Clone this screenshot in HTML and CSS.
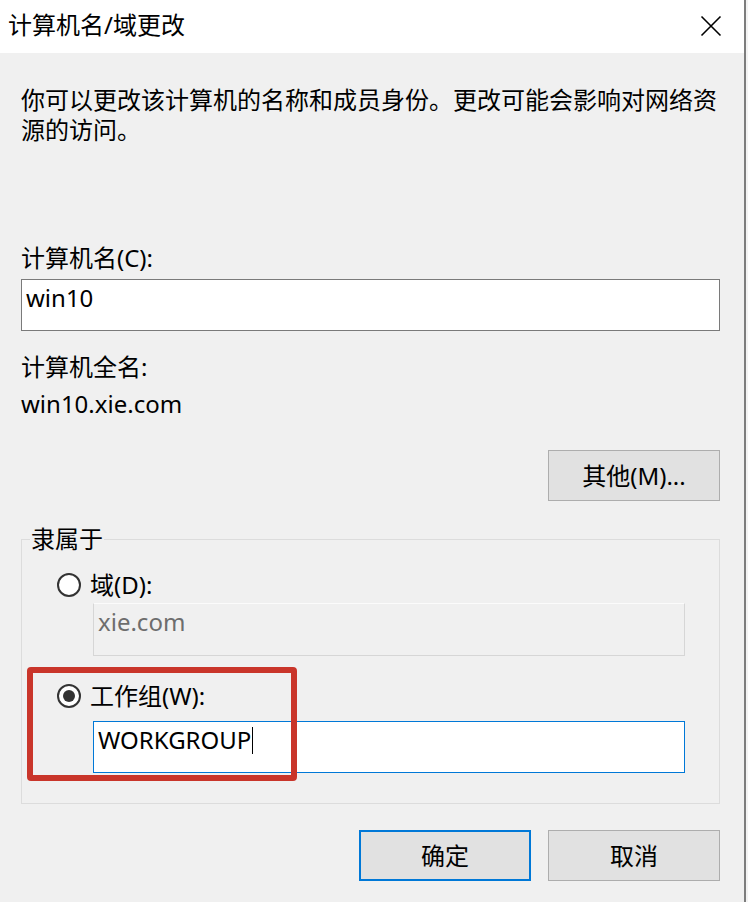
FILE: index.html
```html
<!DOCTYPE html>
<html lang="zh-CN">
<head>
<meta charset="utf-8">
<title>计算机名/域更改</title>
<link rel="stylesheet" href="styles.css">
</head>
<body>
<div class="window">
  <div class="titlebar">
    <span class="title">计算机名/域更改</span>
    <svg class="close" width="22" height="22" viewBox="0 0 22 22">
      <path d="M1.5 1.5 L20.5 20.5 M20.5 1.5 L1.5 20.5" stroke="#000" stroke-width="1.6" fill="none"/>
    </svg>
  </div>
  <div class="content">
    <p class="desc">你可以更改该计算机的名称和成员身份。更改可能会影响对网络资源的访问。</p>
    <div class="label label-name">计算机名(C):</div>
    <div class="textbox">win10</div>
    <div class="label label-full">计算机全名:</div>
    <div class="label value">win10.xie.com</div>
    <div class="row-right more-row">
      <div class="btn">其他(M)...</div>
    </div>
    <fieldset class="group">
      <legend class="legend">隶属于</legend>
      <div class="radio-row first">
        <span class="radio"></span>
        <span class="radio-label">域(D):</span>
      </div>
      <div class="textbox disabled">xie.com</div>
      <div class="radio-row second">
        <span class="radio checked"></span>
        <span class="radio-label">工作组(W):</span>
      </div>
      <div class="textbox focused">WORKGROUP<span class="caret"></span></div>
    </fieldset>
    <div class="row-right actions">
      <div class="btn default">确定</div>
      <div class="btn">取消</div>
    </div>
  </div>
  <div class="highlight"></div>
</div>
</body>
</html>
```
FILE: styles.css
```css
html, body {
  margin: 0;
  padding: 0;
  background: #f3f3f3;
}
body {
  width: 748px;
  height: 902px;
  overflow: hidden;
  font-family: "Noto Sans", "Noto Sans CJK SC", sans-serif;
  font-size: 24px;
  color: #000;
}
.window {
  position: relative;
  width: 744px;
  height: 902px;
  background: #f0f0f0;
  border-right: 2px solid #7d7d7d;
}
.titlebar {
  height: 53px;
  background: #fff;
  display: flex;
  align-items: center;
  justify-content: space-between;
  padding: 0 22px 0 8px;
}
.title {
  line-height: 30px;
  margin-top: -4px;
}
.close {
  display: block;
  margin-top: -2px;
}
.content {
  padding: 0 24px 0 21px;
  display: flex;
  flex-direction: column;
}
.desc {
  margin: 32px 0 0 0;
  line-height: 30px;
  padding-right: 0;
}
.label {
  line-height: 30px;
}
.label-name {
  margin-top: 98px;
}
.textbox {
  box-sizing: border-box;
  height: 52px;
  border: 1px solid #7a7a7a;
  background: #fff;
  line-height: 30px;
  padding: 3px 4px 0 4px;
  white-space: nowrap;
}
.content > .textbox {
  margin-top: 6px;
}
.label-full {
  margin-top: 21px;
}
.value {
  margin-top: 7px;
}
.row-right {
  display: flex;
  justify-content: flex-end;
  gap: 17px;
}
.more-row {
  margin-top: 31px;
}
.actions {
  margin-top: 26px;
}
.btn {
  box-sizing: border-box;
  width: 172px;
  height: 51px;
  border: 1px solid #adadad;
  background: #e1e1e1;
  display: flex;
  align-items: center;
  justify-content: center;
  line-height: 30px;
}
.btn.default {
  border: 2px solid #0078d7;
}
.group {
  margin: 23px 0 0 0;
  padding: 0 34px 30px 35px;
  border: 1px solid #dcdcdc;
  min-width: 0;
}
.legend {
  padding: 0 1px;
  margin-left: -27px;
  line-height: 30px;
}
.radio-row {
  display: flex;
  align-items: center;
  gap: 9px;
  line-height: 30px;
}
.radio-row.first {
  margin-top: 16px;
}
.radio-row.second {
  margin-top: 25px;
}
.radio {
  box-sizing: border-box;
  width: 24px;
  height: 24px;
  border: 2px solid #333;
  border-radius: 50%;
  background: #fff;
  display: flex;
  align-items: center;
  justify-content: center;
}
.radio.checked::after {
  content: "";
  width: 12px;
  height: 12px;
  border-radius: 50%;
  background: #333;
}
.group .textbox {
  margin-left: 36px;
}
.textbox.disabled {
  margin-top: 3px;
  height: 53px;
  background: #f0f0f0;
  border: 1px solid #d6d6d6;
  border-top-color: #fbfbfb;
  color: #6d6d6d;
}
.textbox.focused {
  margin-top: 10px;
  border-color: #0078d7;
}
.caret {
  display: inline-block;
  width: 1px;
  height: 27px;
  background: #000;
  vertical-align: -5px;
  margin-left: 1px;
}
.highlight {
  position: absolute;
  left: 27px;
  top: 667px;
  width: 258px;
  height: 102px;
  border: 6px solid #c9352a;
  border-radius: 4px;
}
```
